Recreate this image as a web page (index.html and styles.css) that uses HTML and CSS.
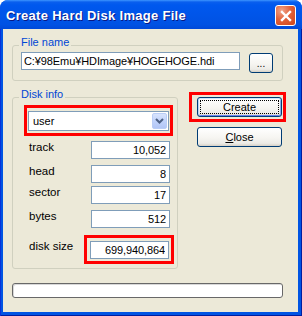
FILE: index.html
```html
<!DOCTYPE html>
<html>
<head>
  <title>Create Hard Disk Image File</title>
  <link rel="stylesheet" href="styles.css">
</head>
<body>
  <div class="window">
    <div class="titlebar">
      <span class="title">Create Hard Disk Image File</span>
      <span class="close-x">
        <svg width="12" height="12" viewBox="0 0 12 12"><path d="M2 2 L10 10 M10 2 L2 10" stroke="#fff" stroke-width="2.4" stroke-linecap="square" fill="none"/></svg>
      </span>
    </div>
    <div class="frame">
      <div class="client">
        <!-- ファイル名 -->
        <div class="group file-group">
          <span class="group-title">File name</span>
          <div class="file-row">
            <input type="text" class="edit path" value="C:¥98Emu¥HDImage¥HOGEHOGE.hdi">
            <button class="btn browse">...</button>
          </div>
        </div>

        <div class="main-row">
          <!-- ディスク情報 -->
          <div class="group disk-group">
            <span class="group-title">Disk info</span>
            <div class="mark combo-mark">
              <div class="combo">
                <span class="combo-text">user</span>
                <span class="combo-btn">
                  <svg width="9" height="6" viewBox="0 0 9 6"><path d="M1 1 L4.5 4.5 L8 1" stroke="#4d6185" stroke-width="2" fill="none"/></svg>
                </span>
              </div>
            </div>
            <div class="field row-track"><label>track</label><input type="text" class="edit num" value="10,052"></div>
            <div class="field row-head"><label>head</label><input type="text" class="edit num" value="8"></div>
            <div class="field row-sector"><label>sector</label><input type="text" class="edit num" value="17"></div>
            <div class="field row-bytes"><label>bytes</label><input type="text" class="edit num" value="512"></div>
            <div class="field row-size">
              <label>disk size</label>
              <div class="mark size-mark"><input type="text" class="edit num" value="699,940,864"></div>
            </div>
          </div>

          <div class="side">
            <div class="mark create-mark"><button class="btn default">Create</button></div>
            <button class="btn close"><u>C</u>lose</button>
          </div>
        </div>

        <div class="progress"></div>
      </div>
    </div>
  </div>
</body>
</html>
```

FILE: styles.css
```css
/* ウィンドウ */
body {
  margin: 0;
  background: #fff;
  font-family: "Liberation Sans", Arial, sans-serif;
}
.window {
  width: 302px;
  height: 316px;
  display: flex;
  flex-direction: column;
  border-radius: 8px 8px 0 0;
  overflow: hidden;
  background: #0054e3;
}
.titlebar {
  height: 29px;
  flex: none;
  display: flex;
  align-items: flex-start;
  justify-content: space-between;
  background: linear-gradient(to bottom, #3d95ff 0px, #0a5fee 2px, #0058ee 5px, #0055e9 50%, #0052e3 85%, #0049d8 100%);
}
.title {
  padding: 2px 0 0 6px;
  line-height: 27px;
  font-size: 13px;
  font-weight: bold;
  letter-spacing: 0.3px;
  color: #fff;
  text-shadow: 1px 1px #0a1883;
}
.close-x {
  width: 21px;
  height: 21px;
  box-sizing: border-box;
  margin: 5px 6px 0 0;
  border: 1px solid #fff;
  border-radius: 3px;
  background: radial-gradient(circle at 30% 25%, #f0a58a 0%, #e2623b 45%, #cc4419 100%);
  display: flex;
  align-items: center;
  justify-content: center;
}
.frame {
  flex: 1;
  padding: 0 4px 4px 3px;
  background: #0054e3;
  box-shadow: inset 1px 0 #0831d9, inset -1px 0 #001ea0, inset 0 -1px #001ea0;
}
.client {
  height: 100%;
  box-sizing: border-box;
  padding: 16px 0 0 9px;
  background: #ece9d8;
}

/* グループボックス */
.group {
  position: relative;
  box-sizing: border-box;
  border: 1px solid #d0d0bf;
  border-radius: 3px;
}
.group-title {
  position: absolute;
  top: -10px;
  left: 6px;
  padding: 0 2px;
  background: #ece9d8;
  color: #0046d5;
  font-size: 11px;
  line-height: 13px;
}
.file-group {
  width: 271px;
  padding: 6px 8px 7px 8px;
}
.file-row {
  display: flex;
  align-items: flex-start;
}

/* エディット */
.edit {
  box-sizing: border-box;
  height: 18px;
  margin: 0;
  border: 1px solid #7f9db9;
  background: #fff;
  font-family: inherit;
  font-size: 11px;
  letter-spacing: -0.1px;
  color: #000;
  outline: none;
}
.path {
  width: 219px;
  padding: 0 2px;
}
.num {
  width: 79px;
  padding: 0 3px 0 0;
  text-align: right;
}

/* ボタン */
.btn {
  box-sizing: border-box;
  height: 20px;
  padding: 0;
  border: 1px solid #003c74;
  border-radius: 3px;
  background: linear-gradient(to bottom, #fff 0%, #f6f5f1 55%, #ecebe6 85%, #d6d0c5 100%);
  font-family: inherit;
  font-size: 11px;
  color: #000;
}
.browse {
  width: 24px;
  margin: 1px 0 0 9px;
  font-size: 10px;
  line-height: 20px;
}
.btn.default {
  box-shadow: inset 0 1px #cee7ff, inset 1px 0 #bcd4f6, inset -1px 0 #89ade4, inset 0 -1px #6982ee;
  outline: 1px dotted #000;
  outline-offset: -4px;
}

.main-row {
  display: flex;
  align-items: flex-start;
  margin-top: 11px;
}
.disk-group {
  width: 166px;
  margin-top: 5px;
  padding: 7px 3px 4px 11px;
}

/* 赤い枠 */
.mark {
  box-sizing: border-box;
  border: 3px solid #ff0000;
}
.combo-mark {
  width: 149px;
  padding: 3px 1px 2px 1px;
}
.combo {
  box-sizing: border-box;
  height: 20px;
  border: 1px solid #7f9db9;
  background: #fff;
  display: flex;
  align-items: center;
  justify-content: space-between;
}
.combo-text {
  padding-left: 4px;
  font-size: 11px;
}
.combo-btn {
  width: 15px;
  height: 16px;
  margin-right: 1px;
  box-sizing: border-box;
  border: 1px solid #b9cdf6;
  border-radius: 2px;
  background: linear-gradient(to bottom, #d8e4fd 0%, #c1d3fb 50%, #b2c6f6 100%);
  display: flex;
  align-items: center;
  justify-content: center;
}

/* 行 */
.field {
  display: flex;
  align-items: flex-start;
}
.field label {
  width: 62px;
  margin-left: 5px;
  font-size: 11.5px;
  line-height: 13px;
  color: #000;
}
.row-track { margin-top: 5px; }
.row-head { margin-top: 6px; }
.row-sector { margin-top: 3px; }
.row-bytes { margin-top: 6px; }
.row-size { margin-top: 7px; }
.row-size label {
  width: 56px;
  margin-top: 5px;
}
.size-mark {
  width: 90px;
  padding: 2px 2px 2px 3px;
}

/* 右側 */
.side {
  display: flex;
  flex-direction: column;
  margin-left: 11px;
}
.create-mark {
  width: 97px;
  padding: 2px 1px 2px 5px;
}
.create-mark .btn {
  width: 85px;
}
.close {
  width: 85px;
  margin: 5px 0 0 8px;
}

.progress {
  width: 271px;
  height: 15px;
  box-sizing: border-box;
  margin-top: 14px;
  border: 1px solid #686868;
  border-radius: 3px;
  background: #fff;
  box-shadow: inset 1px 1px #d8d8d8;
}
```
